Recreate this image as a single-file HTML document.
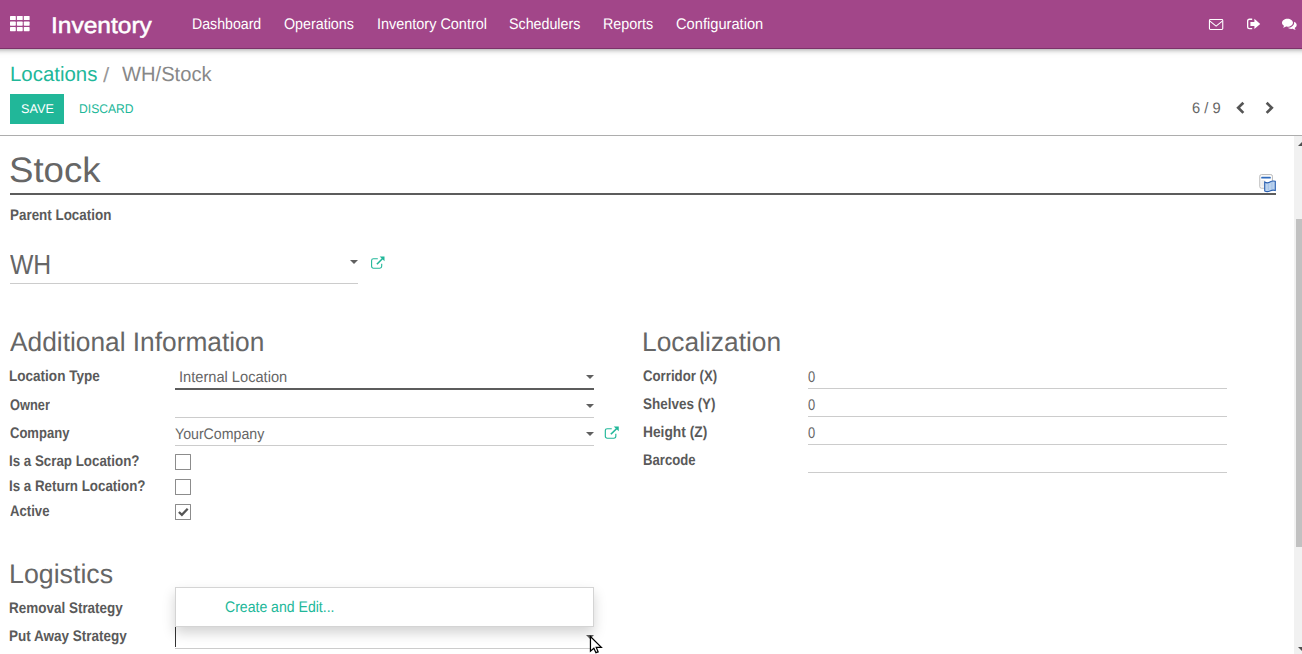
<!DOCTYPE html>
<html lang="en"><head><meta charset="utf-8"><title>WH/Stock - Odoo</title>
<style>
html,body{margin:0;padding:0;}
body{width:1302px;height:654px;overflow:hidden;background:#fff;position:relative;font-family:"Liberation Sans",sans-serif;}
.t{position:absolute;white-space:pre;line-height:normal;transform-origin:0 0;text-rendering:geometricPrecision;}
.a{position:absolute;}
#nav{left:-20px;top:0;width:1342px;height:48px;background:#a24689;border-bottom:1px solid #7c3269;box-shadow:0 0 6px rgba(0,0,0,.5);}
.ul{position:absolute;height:1px;background:#ccc;}
.uld{position:absolute;height:2px;background:#5c5c5c;}
.cb{position:absolute;width:14px;height:14px;border:1px solid #8c8c8c;border-radius:.5px;background:#fff;}
.car{position:absolute;width:0;height:0;border-left:4px solid transparent;border-right:4px solid transparent;border-top:4.5px solid #606060;}
svg{position:absolute;overflow:visible;}
</style></head>
<body>
<div class="a" id="nav"></div>
<!-- apps grid icon -->
<svg style="left:10px;top:16px" width="20" height="15" viewBox="0 0 20 15"><g fill="#fff">
<rect x="0" y="0" width="5.8" height="4.1" rx=".6"/><rect x="6.9" y="0" width="5.8" height="4.1" rx=".6"/><rect x="13.8" y="0" width="5.8" height="4.1" rx=".6"/>
<rect x="0" y="5.55" width="5.8" height="4.1" rx=".6"/><rect x="6.9" y="5.55" width="5.8" height="4.1" rx=".6"/><rect x="13.8" y="5.55" width="5.8" height="4.1" rx=".6"/>
<rect x="0" y="11.1" width="5.8" height="4.1" rx=".6"/><rect x="6.9" y="11.1" width="5.8" height="4.1" rx=".6"/><rect x="13.8" y="11.1" width="5.8" height="4.1" rx=".6"/>
</g></svg>
<!-- envelope -->
<svg style="left:1208px;top:18px" width="16" height="13" viewBox="0 0 16 13"><rect x="1.45" y="1.5" width="13.3" height="10" rx=".9" fill="none" stroke="#fff" stroke-width="1.1"/><path d="M1.9 3.1 L8.1 8.1 L14.3 3.1" fill="none" stroke="#fff" stroke-width="1.1"/></svg>
<!-- sign-out -->
<svg style="left:1247px;top:18px" width="14" height="12" viewBox="0 0 14 12"><g transform="translate(0 .6)"><path d="M5.2 .65 H2.5 Q.65 .65 .65 2.5 V8.1 Q.65 9.95 2.5 9.95 H5.2" fill="none" stroke="#fff" stroke-width="1.3"/><path d="M3.4 3.3 H7.4 V.2 L13.2 5.3 L7.4 10.4 V7.3 H3.4 Z" fill="#fff"/></g></svg>
<!-- comments -->
<svg style="left:1282px;top:18px" width="16" height="13" viewBox="0 0 16 13"><g transform="translate(0 .7) scale(.98)"><path d="M5.6 0 C8.7 0 11.2 1.8 11.2 4.1 C11.2 6.4 8.7 8.2 5.6 8.2 C5.1 8.2 4.6 8.15 4.15 8.05 C3.3 8.7 2.2 9.15 1 9.2 C1.5 8.7 1.95 8 2.1 7.3 C.8 6.55 0 5.4 0 4.1 C0 1.8 2.5 0 5.6 0 Z" fill="#fff"/><path d="M12.2 3.2 C13.9 3.9 15 5.1 15 6.5 C15 7.7 14.2 8.8 12.95 9.5 C13.1 10.2 13.5 10.9 14 11.4 C12.8 11.35 11.7 10.9 10.9 10.25 C10.4 10.35 9.9 10.4 9.4 10.4 C7.9 10.4 6.6 10 5.6 9.3 C9.4 9.3 12.4 7 12.4 4.1 C12.4 3.8 12.3 3.5 12.2 3.2 Z" fill="#fff"/></g></svg>

<!-- control panel -->
<div class="a" style="left:0;top:135px;width:1302px;height:1px;background:#adadad"></div>
<div class="a" style="left:10px;top:94px;width:54px;height:30px;background:#21b799"></div>
<!-- pager chevrons -->
<svg style="left:1236px;top:101px" width="9" height="14" viewBox="0 0 9 14"><g transform="translate(0 .8)"><path d="M6.4 0 L8.3 1.9 L4.1 6 L8.3 10.1 L6.4 12 L.3 6 Z" fill="#555"/></g></svg>
<svg style="left:1265px;top:101px" width="10" height="14" viewBox="0 0 10 14"><g transform="translate(.6 .8)"><path d="M2 0 L.1 1.9 L4.3 6 L.1 10.1 L2 12 L8.1 6 Z" fill="#555"/></g></svg>

<!-- scrollbar -->
<div class="a" style="left:1294px;top:136px;width:8px;height:518px;background:#f1f1f1"></div>
<div class="a" style="left:1296px;top:219px;width:6px;height:328px;background:#c1c1c1"></div>
<svg style="left:1298px;top:141px" width="4" height="5" viewBox="0 0 4 5"><path d="M0 5 L4 1 V5 Z" fill="#505050"/></svg>
<svg style="left:1298px;top:647px" width="4" height="5" viewBox="0 0 4 5"><path d="M0 0 H4 V4 Z" fill="#505050"/></svg>

<!-- title underline -->
<div class="uld" style="left:10px;top:193px;width:1266px"></div>
<!-- translate icon -->
<svg style="left:1259px;top:174px" width="18" height="19" viewBox="0 0 18 19"><rect x=".8" y=".6" width="12.6" height="13.6" rx="1.6" fill="#fff" stroke="#b8b8b8"/><rect x="2.2" y="2.7" width="9.6" height="1.8" rx=".6" fill="#2f6bbd"/><rect x="2.3" y="6" width="4" height="6.6" fill="#ededed"/><path d="M5.7 8 Q8.3 9.7 11 8 T16.3 7.3 V16.5 Q13.7 15.5 11 16.9 T5.7 17 Z" fill="#bcd3ee" stroke="#2a5fb0" stroke-width="1.1"/><path d="M9.3 9.2 V16.4 M12.9 7.8 V15.2" stroke="#9fc0e8" stroke-width=".9"/></svg>

<!-- WH field -->
<div class="ul" style="left:10px;top:283px;width:348px"></div>
<div class="car" style="left:350px;top:260px"></div>
<svg style="left:371px;top:256px" width="14" height="14" viewBox="0 0 14 14"><g transform="translate(0 .5)"><path d="M10.7 7.2 V9.8 Q10.7 11.7 8.8 11.7 H2.5 Q.6 11.7 .6 9.8 V4.1 Q.6 2.2 2.5 2.2 H6.8" fill="none" stroke="#21b799" stroke-width="1.1"/><path d="M5.9 7.7 L11.6 2" fill="none" stroke="#21b799" stroke-width="1.6"/><path d="M8.7 0 H13.5 V4.8 Z" fill="#21b799"/></g></svg>

<!-- left column fields -->
<div class="uld" style="left:175px;top:388px;width:419px"></div>
<div class="car" style="left:586px;top:375px"></div>
<div class="ul" style="left:175px;top:417px;width:419px"></div>
<div class="car" style="left:586px;top:404px"></div>
<div class="ul" style="left:175px;top:445px;width:419px"></div>
<div class="car" style="left:586px;top:432px"></div>
<svg style="left:604px;top:426px" width="16" height="14" viewBox="0 0 16 14"><g transform="translate(.7 .5) scale(1.04 1)"><path d="M10.7 7.2 V9.8 Q10.7 11.7 8.8 11.7 H2.5 Q.6 11.7 .6 9.8 V4.1 Q.6 2.2 2.5 2.2 H6.8" fill="none" stroke="#21b799" stroke-width="1.1"/><path d="M5.9 7.7 L11.6 2" fill="none" stroke="#21b799" stroke-width="1.6"/><path d="M8.7 0 H13.5 V4.8 Z" fill="#21b799"/></g></svg>
<div class="cb" style="left:175px;top:454px"></div>
<div class="cb" style="left:175px;top:479px"></div>
<div class="cb" style="left:175px;top:504px"></div>
<svg style="left:178px;top:507px" width="11" height="10" viewBox="0 0 11 10"><g transform="translate(0 .5)"><path d="M.9 4.5 L3.9 7.3 L9.7 1.3" fill="none" stroke="#555" stroke-width="2.3"/></g></svg>

<!-- right column fields -->
<div class="ul" style="left:808px;top:388px;width:419px"></div>
<div class="ul" style="left:808px;top:416px;width:419px"></div>
<div class="ul" style="left:808px;top:444px;width:419px"></div>
<div class="ul" style="left:808px;top:472px;width:419px"></div>

<!-- put away field -->
<div class="ul" style="left:175px;top:648px;width:419px"></div>
<div class="car" style="left:586px;top:635px"></div>
<div class="a" style="left:175px;top:627px;width:1px;height:20px;background:#333"></div>
<!-- dropdown -->
<div class="a" style="left:175px;top:587px;width:417px;height:38px;background:#fff;border:1px solid rgba(0,0,0,.17);box-shadow:0 6px 12px rgba(0,0,0,.175)"></div>
<!-- mouse cursor -->
<svg style="left:588px;top:633px" width="16" height="21" viewBox="0 0 16 21"><path transform="translate(2.45 3.5)" d="M0 0 V14.7 L3.4 11.7 L5.5 16.2 L7.7 15.3 L5.8 10.9 H10.9 Z" fill="#fff" stroke="#000" stroke-width="1.25" stroke-linejoin="miter"/></svg>

<span class="t" style="left:51.29px;top:13.00px;font-size:22.6px;color:#fff;transform:scaleX(1.0853);-webkit-text-stroke:0.5px #fff;">Inventory</span>
<span class="t" style="left:192.25px;top:16.00px;font-size:15.4px;color:#fff;transform:scaleX(0.9192);">Dashboard</span>
<span class="t" style="left:284.10px;top:16.00px;font-size:15.4px;color:#fff;transform:scaleX(0.9287);">Operations</span>
<span class="t" style="left:376.61px;top:16.00px;font-size:15.4px;color:#fff;transform:scaleX(0.9383);">Inventory Control</span>
<span class="t" style="left:509.11px;top:16.00px;font-size:15.4px;color:#fff;transform:scaleX(0.9263);">Schedulers</span>
<span class="t" style="left:602.94px;top:16.00px;font-size:15.4px;color:#fff;transform:scaleX(0.9315);">Reports</span>
<span class="t" style="left:675.89px;top:16.00px;font-size:15.4px;color:#fff;transform:scaleX(0.9525);">Configuration</span>
<span class="t" style="left:9.89px;top:63.00px;font-size:20.6px;color:#21b799;transform:scaleX(0.9910);">Locations</span>
<span class="t" style="left:103.40px;top:64.00px;font-size:20.6px;color:#999;transform:scaleX(1.0934);">/</span>
<span class="t" style="left:121.98px;top:63.00px;font-size:20.6px;color:#888;transform:scaleX(0.9784);">WH/Stock</span>
<span class="t" style="left:20.97px;top:102.00px;font-size:12.6px;color:#fff;transform:scaleX(1.0058);">SAVE</span>
<span class="t" style="left:79.24px;top:102.00px;font-size:12.6px;color:#21b799;transform:scaleX(0.9639);">DISCARD</span>
<span class="t" style="left:1191.77px;top:100.00px;font-size:15.2px;color:#666;transform:scaleX(0.9676);">6 / 9</span>
<span class="t" style="left:9.11px;top:151.00px;font-size:35.3px;color:#666;transform:scaleX(1.0377);">Stock</span>
<span class="t" style="left:9.83px;top:207.00px;font-size:15.4px;color:#5a5a5a;transform:scaleX(0.8715);font-weight:700;">Parent Location</span>
<span class="t" style="left:10.09px;top:249.00px;font-size:27.6px;color:#666;transform:scaleX(0.8975);">WH</span>
<span class="t" style="left:9.88px;top:327.00px;font-size:26.8px;color:#666;transform:scaleX(0.9813);">Additional Information</span>
<span class="t" style="left:9.42px;top:368.00px;font-size:15.4px;color:#5a5a5a;transform:scaleX(0.8797);font-weight:700;">Location Type</span>
<span class="t" style="left:178.59px;top:369.00px;font-size:15.4px;color:#666;transform:scaleX(0.9507);">Internal Location</span>
<span class="t" style="left:9.78px;top:397.00px;font-size:15.4px;color:#5a5a5a;transform:scaleX(0.8333);font-weight:700;">Owner</span>
<span class="t" style="left:9.77px;top:425.00px;font-size:15.4px;color:#5a5a5a;transform:scaleX(0.8468);font-weight:700;">Company</span>
<span class="t" style="left:175.35px;top:426.00px;font-size:15.4px;color:#666;transform:scaleX(0.9200);">YourCompany</span>
<span class="t" style="left:9.43px;top:453.00px;font-size:15.4px;color:#5a5a5a;transform:scaleX(0.8666);font-weight:700;">Is a Scrap Location?</span>
<span class="t" style="left:9.43px;top:478.00px;font-size:15.4px;color:#5a5a5a;transform:scaleX(0.8672);font-weight:700;">Is a Return Location?</span>
<span class="t" style="left:9.98px;top:503.00px;font-size:15.4px;color:#5a5a5a;transform:scaleX(0.8550);font-weight:700;">Active</span>
<span class="t" style="left:642.31px;top:327.00px;font-size:26.8px;color:#666;transform:scaleX(0.9831);">Localization</span>
<span class="t" style="left:643.06px;top:368.00px;font-size:15.4px;color:#5a5a5a;transform:scaleX(0.8590);font-weight:700;">Corridor (X)</span>
<span class="t" style="left:643.16px;top:396.00px;font-size:15.4px;color:#5a5a5a;transform:scaleX(0.8748);font-weight:700;">Shelves (Y)</span>
<span class="t" style="left:642.71px;top:424.00px;font-size:15.4px;color:#5a5a5a;transform:scaleX(0.8949);font-weight:700;">Height (Z)</span>
<span class="t" style="left:642.75px;top:452.00px;font-size:15.4px;color:#5a5a5a;transform:scaleX(0.8529);font-weight:700;">Barcode</span>
<span class="t" style="left:807.97px;top:369.00px;font-size:15.4px;color:#666;transform:scaleX(0.8409);">0</span>
<span class="t" style="left:807.97px;top:397.00px;font-size:15.4px;color:#666;transform:scaleX(0.8409);">0</span>
<span class="t" style="left:807.97px;top:425.00px;font-size:15.4px;color:#666;transform:scaleX(0.8409);">0</span>
<span class="t" style="left:9.28px;top:559.00px;font-size:26.8px;color:#666;transform:scaleX(0.9989);">Logistics</span>
<span class="t" style="left:9.42px;top:600.00px;font-size:15.4px;color:#5a5a5a;transform:scaleX(0.8754);font-weight:700;">Removal Strategy</span>
<span class="t" style="left:9.42px;top:628.00px;font-size:15.4px;color:#5a5a5a;transform:scaleX(0.8774);font-weight:700;">Put Away Strategy</span>
<span class="t" style="left:225.21px;top:599.00px;font-size:15.4px;color:#21b799;transform:scaleX(0.9139);">Create and Edit...</span>

</body></html>
